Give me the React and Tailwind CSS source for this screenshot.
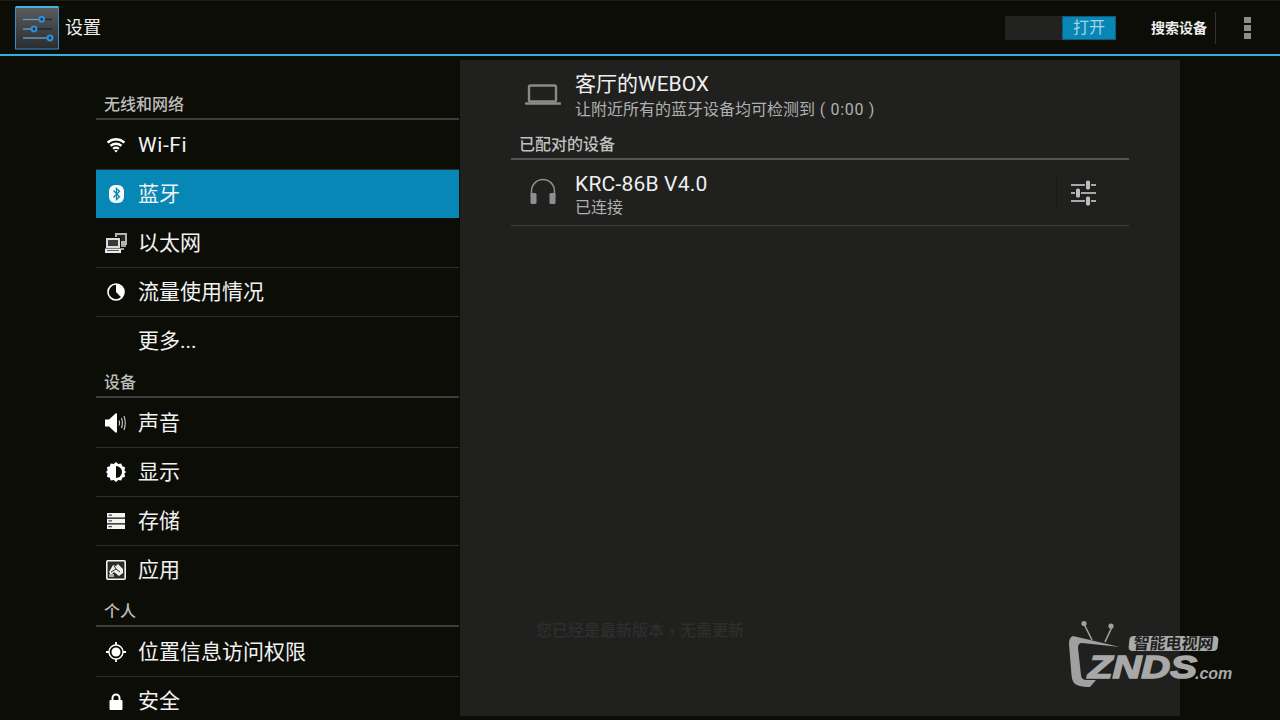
const font = { fontFamily: '"Roboto", "Noto Sans CJK SC", sans-serif' };
const logoFont = { fontFamily: '"Liberation Sans", sans-serif' };

const WifiIcon = () => (
  <svg width="20" height="15" viewBox="0 0 20 15" fill="none" stroke="#fff" strokeWidth="2.400">
    <path d="M1.500 4.500Q10 -1.800 18.500 4.500" />
    <path d="M4.500 7.800Q10 3.600 15.500 7.800" />
    <path d="M7 10.800Q10 8.400 13 10.800" strokeWidth="2" />
    <path d="M10 14.500L8 12.500Q10 11.300 12 12.500Z" fill="#fff" stroke="none" />
  </svg>
);

const BluetoothIcon = () => (
  <svg width="15" height="18" viewBox="0 0 15 18">
    <rect x="0" y="0" width="15" height="18" rx="6" fill="#f4fafc" />
    <path d="M4.500 5.500L10.500 11.700L7.500 14.500V3.500L10.500 6.300L4.500 12.500" fill="none" stroke="#0787b5" strokeWidth="1.300" />
  </svg>
);

const EthernetIcon = () => (
  <svg width="22" height="20" viewBox="0 0 22 20">
    <rect x="10" y="0" width="12" height="12" fill="#b4b4b4" />
    <rect x="12" y="2" width="8" height="6" fill="#262624" />
    <rect x="0.500" y="4.500" width="15" height="11" fill="#dcdcdc" stroke="#0d0d08" />
    <rect x="3" y="7" width="10" height="6" fill="#3a3a38" />
    <rect x="0" y="15.500" width="16" height="4.500" fill="#ececec" />
    <path d="M2 17h12v1H2z" fill="#555" />
    <path d="M16 12h5v2h-5zM16 15h3v2h-3z" fill="#a0a0a0" />
  </svg>
);

const DataUsageIcon = () => (
  <svg width="18" height="18" viewBox="0 0 18 18">
    <circle cx="9" cy="9" r="8" fill="none" stroke="#fff" strokeWidth="1.600" />
    <path d="M9 1A8 8 0 0 1 14.500 14.800L9 9Z" fill="#fff" />
  </svg>
);

const SoundIcon = () => (
  <svg width="22" height="22" viewBox="0 0 22 22" fill="none">
    <path d="M0 7.500h4L10.500 1.500C11.500 1 12 1.500 12 2.500v17c0 1-.5 1.500-1.500 1L4 14.500H0z" fill="#fff" />
    <path d="M14 8.500q1 2.500 0 5M16.500 6q1.700 5 0 10M19 4q2.500 7 0 14" stroke="#cfcfcf" strokeWidth="1.100" />
  </svg>
);

const DisplayIcon = () => (
  <svg width="20" height="20" viewBox="0 0 20 20">
    <path d="M10 0l2.300 2.100 3-.7.900 2.900 2.900.9-.7 3L20 10l-1.600 1.800.7 3-2.900.9-.9 2.900-3-.7L10 20l-2.300-2.100-3 .7-.9-2.900-2.900-.9.7-3L0 10l1.600-1.800-.7-3 2.900-.9.900-2.900 3 .7z" fill="#fff" />
    <path d="M10 4a6 6 0 0 1 0 12z" fill="#0d0d08" />
  </svg>
);

const StorageIcon = () => (
  <svg width="18" height="16" viewBox="0 0 18 16" fill="#f4f4f4">
    <path d="M0 0h18v4.500H0zM0 5.800h18v4.500H0zM0 11.500h18v4.500H0z" />
    <path d="M1.500 1.500h3.500v1.200H1.500zM1.500 7.300h3.500v1.200H1.500zM1.500 13h3.500v1.200H1.500z" fill="#444" />
  </svg>
);

const AppsIcon = () => (
  <svg width="20" height="20" viewBox="0 0 20 20">
    <rect x=".8" y=".8" width="18.400" height="18.400" rx="1" fill="#2a2a27" stroke="#f4f4f4" strokeWidth="1.600" />
    <path d="M3 12L7 5l3 1 2-2 5 5v4L13 16 8 12l-3 3z" fill="#eee" />
    <path d="M5 12l5-3 4 3M8 5.500l2 3.500" stroke="#2a2a27" strokeWidth="1" fill="none" />
    <path d="M3 14h5v3H3z" fill="#aaa" />
  </svg>
);

const LocationIcon = () => (
  <svg width="20" height="20" viewBox="0 0 20 20" fill="none">
    <circle cx="10" cy="10" r="7" stroke="#fff" strokeWidth="1.400" />
    <circle cx="10" cy="10" r="4.500" fill="#fff" />
    <path d="M10 0v3M10 17v3M0 10h3M17 10h3" stroke="#fff" strokeWidth="1.800" />
  </svg>
);

const LockIcon = () => (
  <svg width="14" height="17" viewBox="0 0 14 17">
    <path d="M3.500 8V5a3.500 3.500 0 0 1 7 0v3" fill="none" stroke="#fff" strokeWidth="2" />
    <rect x="0.500" y="7" width="13" height="10" rx="1" fill="#fff" />
  </svg>
);

const SectionHead = ({ label }) => (
  <div className="h-8 mb-px flex items-end pl-2 pb-[3px] border-b-2 border-[#3d3d3a] text-base leading-5 font-medium text-[#bdbdbb]">
    {label}
  </div>
);

const NavRow = ({ icon, label, active, last, wide }) => {
  let border = "border-[#2e2e2b]";
  if (active) border = "bg-[#0787b5] border-[#0d0d08]";
  if (last) border = "border-transparent";
  return (
    <div className={`h-[49px] flex items-center border-b ${border}`}>
      <div className="w-[42px] pr-0.5 flex justify-center">{icon}</div>
      <span className={`pt-0.5 text-[21px] text-[#f2f2f2] ${wide ? "tracking-[0.6px]" : ""}`}>{label}</span>
    </div>
  );
};

const SettingsLogo = () => (
  <svg width="44" height="44" viewBox="0 0 44 44">
    <defs>
      <linearGradient id="logoBg" x1="0" y1="0" x2="0" y2="1">
        <stop offset="0" stopColor="#5a5c5d" />
        <stop offset="1" stopColor="#2a2c2e" />
      </linearGradient>
    </defs>
    <rect x=".5" y="1" width="43" height="42" fill="url(#logoBg)" stroke="#2f8fd0" />
    <rect x="1" y="0" width="42" height="2" fill="#45b2e8" />
    <path d="M8 13.500h29M8 23h29M8 32h29" stroke="#1b2a34" strokeWidth="1.500" />
    <path d="M8 13.500h19M8 23h11M8 32h27" stroke="#6a9cc4" strokeWidth="1.500" />
    <circle cx="26.700" cy="13.300" r="2.400" fill="#1b3040" stroke="#2f8fdc" strokeWidth="2" />
    <circle cx="19" cy="23" r="2.400" fill="#1b3040" stroke="#2f8fdc" strokeWidth="2" />
    <circle cx="35" cy="32" r="2.400" fill="#1b3040" stroke="#2f8fdc" strokeWidth="2" />
  </svg>
);

const LaptopIcon = () => (
  <svg width="36" height="22" viewBox="0 0 36 22" fill="none">
    <rect x="4" y="1.500" width="27" height="16" rx="1.500" stroke="#8a8a8a" strokeWidth="2.400" />
    <path d="M1 19.500h34" stroke="#8a8a8a" strokeWidth="2.600" strokeLinecap="round" />
  </svg>
);

const HeadphoneIcon = () => (
  <svg width="28" height="28" viewBox="0 0 28 28" fill="none">
    <path d="M2.500 20V14a11.500 11.500 0 0 1 23 0v6" stroke="#8f8f8f" strokeWidth="1.500" />
    <rect x="1.500" y="16" width="6" height="11" rx="1.500" fill="#8f8f8f" />
    <rect x="20.500" y="16" width="6" height="11" rx="1.500" fill="#8f8f8f" />
  </svg>
);

const TuneIcon = () => (
  <svg width="26" height="26" viewBox="0 0 26 26" fill="#a8a8a8">
    <path d="M0 4h14v2H0zM20 4h5v2h-5zM0 12h4v2H0zM10 12h15v2H10zM0 20h14v2H0zM20 20h5v2h-5z" />
    <rect x="15" y="0.500" width="4" height="9" rx="1.500" fill="#bdbdbd" />
    <rect x="5" y="8.500" width="4" height="9" rx="1.500" fill="#bdbdbd" />
    <rect x="15" y="16.500" width="4" height="9" rx="1.500" fill="#bdbdbd" />
  </svg>
);

const Watermark = () => (
  <div className="absolute left-[1068px] top-[620px] w-[170px] h-[70px]">
    <svg className="absolute left-0 top-0" width="60" height="70" viewBox="0 0 60 70" fill="none">
      <path d="M24 20L16 4M37 22L44 7" stroke="#a0a0a0" strokeWidth="1.600" />
      <circle cx="16" cy="3.500" r="2.600" fill="#a0a0a0" />
      <circle cx="43" cy="6" r="2.600" fill="#a0a0a0" />
      <path d="M5 16L52 27L14 23Q10 23 10 28L13 55Q13 60 19 60L28 60L22 67Q14 67 9 65Q4 63 3.500 55L1 24Q1 17 5 16Z" fill="#a0a0a0" />
    </svg>
    <div className="absolute left-[61px] top-4 w-[89px] h-[15px] flex items-center justify-center rounded-sm -skew-x-6 bg-[#aaaaaa] text-[#1f1f1e] text-base font-bold leading-none whitespace-nowrap">智能电视网</div>
    <div className="absolute left-5 top-[34px] origin-left scale-x-[1.25] text-[#a8a8a8] text-[32px] leading-[26px] font-bold italic [-webkit-text-stroke:1.5px_#a8a8a8]" style={logoFont}>ZNDS</div>
    <div className="absolute left-[127px] top-[47px] text-[#a8a8a8] text-base leading-[14px] font-bold italic" style={logoFont}>.com</div>
  </div>
);

export default function App() {
  return (
    <div className="relative w-[1280px] h-[720px] overflow-hidden bg-[#0d0d08] text-white flex flex-col" style={font}>
      {/* Action bar */}
      <div className="h-[56px] shrink-0 flex items-center border-b-2 border-[#2fb0e0] border-t border-t-[#1c1c19]">
        <div className="ml-[15px] mr-[6px]"><SettingsLogo /></div>
        <span className="text-lg pt-px text-[#eee]">设置</span>
        <div className="ml-auto w-[111px] h-6 flex justify-end bg-[#222220]">
          <div className="w-[54px] h-6 bg-[#0787b5] border border-[#15597a] text-[#a6d3e4] text-base leading-[22px] text-center">打开</div>
        </div>
        <span className="ml-[35px] text-sm font-bold text-[#eee] whitespace-nowrap">搜索设备</span>
        <div className="ml-2 w-px h-8 bg-[#33332f]" />
        <div className="ml-[28px] mr-[29px] w-[7px] flex flex-col gap-0.5">
          <div className="h-[6px] bg-[#8c8c8c]" />
          <div className="h-[6px] bg-[#8c8c8c]" />
          <div className="h-[6px] bg-[#8c8c8c]" />
        </div>
      </div>

      <div className="flex-1 min-h-0 flex pl-[96px]">
        {/* Settings headers */}
        <div className="w-[363px] pt-8 shrink-0">
          <SectionHead label="无线和网络" />
          <NavRow icon={<WifiIcon />} label="Wi-Fi" wide />
          <NavRow icon={<BluetoothIcon />} label="蓝牙" active />
          <NavRow icon={<EthernetIcon />} label="以太网" />
          <NavRow icon={<DataUsageIcon />} label="流量使用情况" />
          <NavRow label="更多..." last />
          <SectionHead label="设备" />
          <NavRow icon={<SoundIcon />} label="声音" />
          <NavRow icon={<DisplayIcon />} label="显示" />
          <NavRow icon={<StorageIcon />} label="存储" />
          <NavRow icon={<AppsIcon />} label="应用" last />
          <SectionHead label="个人" />
          <NavRow icon={<LocationIcon />} label="位置信息访问权限" />
          <NavRow icon={<LockIcon />} label="安全" />
        </div>

        {/* Bluetooth panel */}
        <div className="ml-px mt-1 w-[720px] h-[656px] bg-[#20201f] px-[51px]">
          <div className="h-[62px] flex">
            <div className="w-[64px] pl-[14px] pt-6"><LaptopIcon /></div>
            <div className="pt-[11px]">
              <div className="text-[21px] leading-[26px] text-[#efefef]">客厅的WEBOX</div>
              <div className="mt-0.5 text-base leading-[22px] text-[#b0b0b0]">
                让附近所有的蓝牙设备均可检测到<span className="tracking-[0.7px]"> ( 0:00 )</span>
              </div>
            </div>
          </div>
          <div className="h-[38px] flex items-end pl-2 pb-[3px] border-b-2 border-[#565655] text-base leading-5 font-medium text-[#c0c0c0]">已配对的设备</div>
          <div className="h-[66px] flex items-center border-b border-[#3e3e3d]">
            <div className="w-[64px] pl-[18px] pb-1"><HeadphoneIcon /></div>
            <div className="flex-1 pt-1">
              <div className="text-[21px] leading-[26px] text-[#efefef] tracking-[0.2px]">KRC-86B V4.0</div>
              <div className="text-base leading-[22px] text-[#b0b0b0]">已连接</div>
            </div>
            <div className="w-px h-8 bg-[#171716]" />
            <div className="ml-[14px] mr-[32px]"><TuneIcon /></div>
          </div>
          <div className="mt-[392px] ml-[25px] text-base leading-[22px] font-medium text-[#2e2e2d]">
            您已经是最新版本<span className="inline-block translate-y-0.5 font-['Noto_Sans_CJK_TC']">，</span>无需更新
          </div>
        </div>
      </div>

      <Watermark />
    </div>
  );
}
